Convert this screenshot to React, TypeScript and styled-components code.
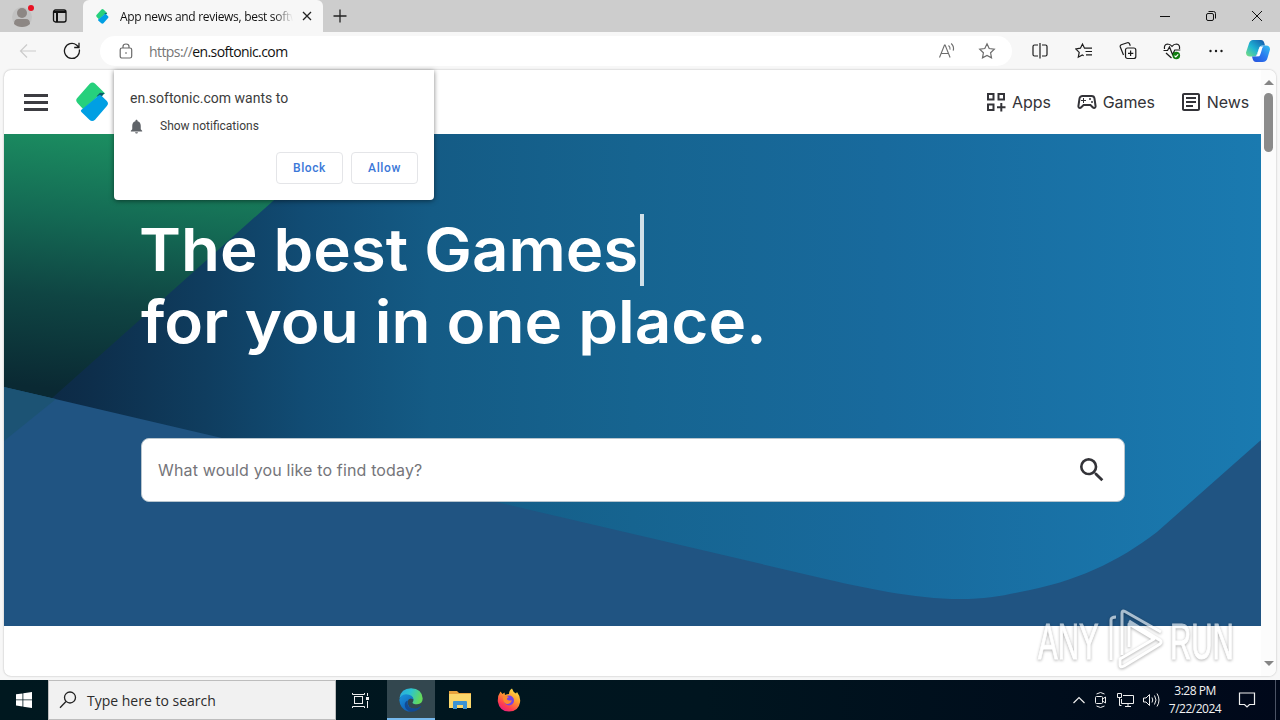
import styled, { createGlobalStyle } from 'styled-components';
import {
    MdNotifications,
    MdOutlineArticle,
    MdOutlineSportsEsports,
    MdSearch
} from 'react-icons/md';

const navItems = [
    { label: 'Apps', icon: <AppsIcon /> },
    { label: 'Games', icon: <MdOutlineSportsEsports size={24} /> },
    { label: 'News', icon: <MdOutlineArticle size={24} /> }
];

const App = () => {
    return (
        <Desktop>
            <GlobalStyle />
            <TitleBar />
            <AddressBar />
            <Viewport>
                <Page>
                    <SiteHeader />
                    <Hero />
                </Page>
                <Scrollbar>
                    <Arrow $up />
                    <Thumb />
                    <Arrow />
                </Scrollbar>
                <Permission />
            </Viewport>
            <Taskbar />
            <Watermark />
        </Desktop>
    );
};

export default App;

function AppsIcon() {
    return (
        <svg width="24" height="24" viewBox="0 0 24 24" fill="none" stroke="currentColor" strokeWidth="2">
            <path d="M4 4h5.500v5.500H4zM14.500 4H20v5.500h-5.500zM4 14.500h5.500V20H4zM17.300 13v8.500M13 17.300h8.500" />
        </svg>
    );
}

const SoftonicMark = ({ width, height }: { width: number; height: number }) => (
    <svg width={width} height={height} viewBox="0 0 34 40">
        <path
            d="M14.2 1.2q2.8-2.4 5.6 0l9.4 9.2q1 1.2-.2 1.4l-5 1.2L7.500 27.500 1.500 21q-2.600-2.800 0-5.400z"
            fill="#26d07c"
        />
        <path d="M29.400 10.800l-3.600 4.600-4.600-1.400 3.500-3.500z" fill="#0a5b68" />
        <path
            d="M22.500 14q2-2.200 4-.2l5.300 5.200q2.300 2.600 0 5.200L19.600 38.300q-3 2.600-5.800 0l-8.200-7.900q-1.200-1.300 0-2.500z"
            fill="#009fe3"
        />
    </svg>
);

const TitleBar = () => (
    <TitleRow>
        <TabTools>
            <svg width="26" height="28" viewBox="0 0 26 28">
                <circle cx="11" cy="17" r="10" fill="#c2c2c2" />
                <circle cx="11" cy="13" r="5" fill="#8d8784" />
                <path d="M3 24q0-5 4-5h8q4 0 4 5-3 3-8 3t-8-3z" fill="#8d8784" />
                <circle cx="20" cy="8" r="3" fill="#e81123" />
            </svg>
            <svg width="16" height="16" viewBox="0 0 16 16" fill="none" stroke="#111" strokeWidth="1.300">
                <rect x="1.500" y="2" width="12.500" height="12" rx="2" />
                <path d="M1.500 4h12.500M5 4v10" strokeWidth="2" />
            </svg>
        </TabTools>
        <Tab>
            <SoftonicMark width={13} height={15} />
            <TabTitle>App news and reviews, best softw</TabTitle>
            <svg width="10" height="10" viewBox="0 0 10 10" stroke="#222" strokeWidth="1.300">
                <path d="M1 1l8 8M9 1l-8 8" />
            </svg>
        </Tab>
        <NewTab>
            <svg width="16" height="16" viewBox="0 0 16 16" stroke="#222" strokeWidth="1.300">
                <path d="M8 1.500v13M1.500 8h13" />
            </svg>
        </NewTab>
        <WindowButtons>
            <svg width="12" height="12" viewBox="0 0 12 12" stroke="#111">
                <path d="M1 6.500h10" />
            </svg>
            <svg width="12" height="12" viewBox="0 0 12 12" stroke="#111" fill="none">
                <rect x="1.500" y="3.500" width="7" height="7" rx="1.500" />
                <path d="M3.500 1.500h5q2 0 2 2v5" />
            </svg>
            <svg width="12" height="12" viewBox="0 0 12 12" stroke="#111">
                <path d="M1 1l10 10M11 1L1 11" />
            </svg>
        </WindowButtons>
    </TitleRow>
);

const star = 'M9 1.800l2.200 4.700 5.100.7-3.700 3.600.9 5.100L9 13.500l-4.500 2.400.9-5.100L1.700 7.200l5.100-.7z';

const AddressBar = () => (
    <ToolRow>
        <NavButtons>
            <svg width="18" height="16" viewBox="0 0 18 16" stroke="#cbcbcb" fill="none" strokeWidth="1.200">
                <path d="M8 1.500L1.500 8 8 14.500M1.500 8H17" />
            </svg>
            <svg width="18" height="18" viewBox="0 0 18 18" stroke="#1b1b1b" fill="none" strokeWidth="1.300">
                <path d="M16.300 7.500A7.500 7.500 0 1 1 13.500 3l2.200 2M16 .8V5.500h-4.800" />
            </svg>
        </NavButtons>
        <UrlField>
            <svg width="14" height="16" viewBox="0 0 14 16" stroke="#6a6a6a" fill="none" strokeWidth="1.200">
                <rect x="1.200" y="5" width="11.500" height="10" rx="1.800" />
                <path d="M4 5V3.500q0-2.500 3-2.500t3 2.500V5" />
                <circle cx="7" cy="10" r=".8" fill="#555" stroke="none" />
            </svg>
            <Url>
                <span>https://</span>en.softonic.com
            </Url>
            <svg width="18" height="18" viewBox="0 0 18 18" stroke="#6d6d6d" fill="none" strokeWidth="1.100">
                <path d="M1.500 15.500L6.500 3h.6l5 12.500M3.200 11.500h7.200M10.500 3.500q2 1.600 1.500 4.200M13.200 1.500q3.200 3 2 7.200" />
            </svg>
            <svg width="18" height="18" viewBox="0 0 18 18" stroke="#6d6d6d" fill="none" strokeWidth="1.200">
                <path d={star} />
            </svg>
        </UrlField>
        <Extras>
            <svg width="18" height="18" viewBox="0 0 18 18" stroke="#1b1b1b" fill="none" strokeWidth="1.200">
                <path d="M7 3H3.500Q2 3 2 4.500v8Q2 14 3.500 14H7M11 3h3.500Q16 3 16 4.500v8q0 1.500-1.500 1.500H11M9 1v15.500" />
            </svg>
            <svg width="18" height="18" viewBox="0 0 18 18" stroke="#1b1b1b" fill="none" strokeWidth="1.200">
                <path d="M11 6.200H9.500L7.500 2 5.400 6.200.8 7l3.400 3.400-.9 4.800 4-2.200 1.400.7M10.500 6.200h6.500M10.500 9.500H17M11 12.800h6" />
            </svg>
            <svg width="18" height="18" viewBox="0 0 18 18" stroke="#1b1b1b" fill="none" strokeWidth="1.200">
                <rect x="6.500" y="6" width="10.300" height="10.500" rx="2" />
                <path d="M11.600 8.500v5.500M9 11.300h5.300M4.500 13L1.300 5q-.5-1.600 1-2.300l6-1.900q1.600-.5 2.200 1l.8 2" />
            </svg>
            <svg width="18" height="18" viewBox="0 0 18 18" stroke="#1b1b1b" fill="none" strokeWidth="1.200">
                <path d="M1.500 7Q.8 2.500 4.500 2q2.800 0 4.500 2.300Q10.700 2 13.500 2q3.700.5 3 5M.5 8.500h4l2-3.500 3 7.500 2.300-4.500h5.500M3 11l5.500 5" />
                <circle cx="13.300" cy="13.500" r="3.800" fill="#107c10" stroke="none" />
                <path d="M11.500 13.600l1.300 1.300 2.400-2.500" stroke="#fff" />
            </svg>
            <svg width="18" height="18" viewBox="0 0 18 18" fill="#1b1b1b">
                <circle cx="3.500" cy="9" r="1.200" />
                <circle cx="9" cy="9" r="1.200" />
                <circle cx="14.500" cy="9" r="1.200" />
            </svg>
            <Copilot />
        </Extras>
    </ToolRow>
);

const Copilot = () => (
    <svg width="24" height="24" viewBox="0 0 24 24">
        <defs>
            <linearGradient id="cpA" x1="0" y1="1" x2="1" y2="0">
                <stop offset="0" stopColor="#7ae07c" />
                <stop offset=".45" stopColor="#1fb3d4" />
                <stop offset="1" stopColor="#1453a8" />
            </linearGradient>
            <linearGradient id="cpB" x1="0" y1="1" x2="1" y2="0">
                <stop offset="0" stopColor="#2850dc" />
                <stop offset=".5" stopColor="#2a78ef" />
                <stop offset="1" stopColor="#34c2f0" />
            </linearGradient>
        </defs>
        <path d="M7 1h8q2.500 0 3.300 3l.7 2.500h-3q-2 0-3 3L11 15q-.8 2.500-3.500 2.500H4q-4 0-4-4L3 4.500Q4 1 7 1z" fill="url(#cpA)" />
        <path d="M17 6.500h3q4 0 4 4L21.500 19q-1 4-5 4H10q-2.500 0-3.300-3L6 17.500h2q2.500 0 3.300-2.500l2-6q.7-2.500 3.700-2.500z" fill="url(#cpB)" />
        <path d="M14 7.500q-1 1-2.800 7.800-.5 1.500-2 2.200 1.800-.2 4-.2 1.200-1 3-8 .4-1.400 1.400-1.800z" fill="#fff" />
    </svg>
);

const SiteHeader = () => (
    <Header>
        <Burger>
            <i />
            <i />
            <i />
        </Burger>
        <SoftonicMark width={33} height={40} />
        <Nav>
            {navItems.map(({ label, icon }) => (
                <NavItem key={label}>
                    {icon}
                    {label}
                </NavItem>
            ))}
        </Nav>
    </Header>
);

const Hero = () => (
    <HeroSection>
        <HeroArt />
        <Headline>
            <HeadLine $stretch={1.078} $inset={-2}>
                The best Games
            </HeadLine>
            <Caret />
        </Headline>
        <Headline>
            <HeadLine $stretch={1.081}>for you in one place.</HeadLine>
        </Headline>
        <SearchBox>
            <span>What would you like to find today?</span>
            <MdSearch size={32} />
        </SearchBox>
    </HeroSection>
);

const HeroArt = () => (
    <Backdrop width="1257" height="492" viewBox="4 134 1257 492">
        <defs>
            <linearGradient id="sea" gradientUnits="userSpaceOnUse" x1="4" y1="0" x2="1261" y2="0">
                <stop offset="0" stopColor="#0c253f" />
                <stop offset=".07" stopColor="#0d2e4b" />
                <stop offset=".16" stopColor="#0f3d5f" />
                <stop offset=".24" stopColor="#114c74" />
                <stop offset=".34" stopColor="#145b85" />
                <stop offset=".5" stopColor="#166490" />
                <stop offset=".7" stopColor="#186a9d" />
                <stop offset="1" stopColor="#1a7ab0" />
            </linearGradient>
            <linearGradient id="leaf" gradientUnits="userSpaceOnUse" x1="180" y1="134" x2="150" y2="400">
                <stop offset="0" stopColor="#1c9162" />
                <stop offset=".35" stopColor="#146a54" />
                <stop offset=".65" stopColor="#0f4543" />
                <stop offset="1" stopColor="#0a2933" />
            </linearGradient>
        </defs>
        <path d="M4 134H1261V626H4z" fill="url(#sea)" />
        <path d="M4 134H348L4 441z" fill="url(#leaf)" />
        <path
            d="M4 387L820 577.700C860 587 915 599 960 599C985 599 1000 596 1020 592C1075 582 1118 562 1157 532L1261 440V626H4z"
            fill="#205482"
        />
        <path d="M4 387L56 399.100 4 441z" fill="#1c5374" />
    </Backdrop>
);

const Permission = () => (
    <Popup>
        <PopupTitle>en.softonic.com wants to</PopupTitle>
        <PopupRow>
            <MdNotifications size={17} color="#5f6368" />
            <span>Show notifications</span>
        </PopupRow>
        <PopupActions>
            <PopupButton>Block</PopupButton>
            <PopupButton>Allow</PopupButton>
        </PopupActions>
    </Popup>
);

const Taskbar = () => (
    <Bar>
        <BarCell>
            <svg width="16" height="16" viewBox="0 0 16 16" fill="#fff">
                <path d="M0 2.300l6.500-.9v6.100H0zM7.300 1.300L16 0v7.500H7.300zM0 8.300h6.500v6.200L0 13.600zM7.300 8.300H16V16l-8.700-1.300z" />
            </svg>
        </BarCell>
        <BarSearch>
            <svg width="18" height="18" viewBox="0 0 18 18" stroke="#222" fill="none" strokeWidth="1.300">
                <circle cx="11" cy="6.500" r="5.500" />
                <path d="M7 10.500L1 16.700" />
            </svg>
            Type here to search
        </BarSearch>
        <BarCell>
            <svg width="17" height="17" viewBox="0 0 17 17" stroke="#eee" fill="none">
                <rect x="2.500" y="4.500" width="8" height="7" />
                <path d="M.5 1v1.500h12V1M.5 16v-1.500h12V16M15.500 1v3M15.500 9v7" />
                <path d="M14 5h3v3h-3z" fill="#eee" stroke="none" />
            </svg>
        </BarCell>
        <BarCell $active>
            <EdgeLogo />
        </BarCell>
        <BarCell>
            <svg width="22" height="20" viewBox="0 0 22 20">
                <path d="M0 1h8l2 2h12v15H0z" fill="#e8a33d" />
                <path d="M0 4h22v14H0z" fill="#fbd76b" />
                <path d="M4 19v-7q0-1 1-1h12q1 0 1 1v7h-4v-4H8v4z" fill="#3b93d4" />
            </svg>
        </BarCell>
        <BarCell>
            <FirefoxLogo />
        </BarCell>
        <Tray>
            <svg width="12" height="8" viewBox="0 0 12 8" stroke="#eee" fill="none" strokeWidth="1.200">
                <path d="M.5 7L6 1.500 11.500 7" />
            </svg>
            <svg width="14" height="18" viewBox="0 0 14 18" stroke="#eee" fill="none">
                <rect x="1.500" y="5.500" width="7" height="7" rx="1" />
                <path d="M8.500 8l3-2v6l-3-2M2.500 3q4-3 8 0M2.500 15q4 3 8 0" />
            </svg>
            <svg width="17" height="16" viewBox="0 0 17 16" stroke="#eee" fill="none">
                <path d="M6 3.500h10.500v8H4.500V7M8 14.500h6M11 11.500v3M.5 1.500h4v4h-4zM2.500 5.500v8h2" />
            </svg>
            <svg width="17" height="14" viewBox="0 0 17 14" stroke="#eee" fill="none">
                <path d="M.5 5v4H3l3.500 3.500v-11L3 5zM9 4.500q1.500 2.500 0 5M11.500 2.500q3 4.500 0 9M14 .5q4 6.500 0 13" />
            </svg>
            <Clock>
                <span>3:28 PM</span>
                <span>7/22/2024</span>
            </Clock>
            <svg width="18" height="18" viewBox="0 0 18 18" stroke="#eee" fill="none" strokeWidth="1.200">
                <path d="M1.500 2h15v11.500h-5L9 16l-2.500-2.500h-5z" />
            </svg>
            <PeekLine />
        </Tray>
    </Bar>
);

const EdgeLogo = () => (
    <svg width="24" height="24" viewBox="0 0 24 24">
        <defs>
            <linearGradient id="edA" x1="0" y1="0" x2="1" y2=".3">
                <stop offset="0" stopColor="#2aa7e0" />
                <stop offset=".5" stopColor="#2cc3d0" />
                <stop offset="1" stopColor="#63d95c" />
            </linearGradient>
            <linearGradient id="edB" x1="0" y1="0" x2=".6" y2="1">
                <stop offset="0" stopColor="#1a95dc" />
                <stop offset="1" stopColor="#0f5cb5" />
            </linearGradient>
        </defs>
        <path d="M.5 10Q2 .5 12 .3q11 .5 11.700 10.200Q23.500 16 18 16.300q-4.500 0-4.500-1.800 1-1 1-2.700Q14 8 9 7.700 3 7.500.5 10z" fill="url(#edA)" />
        <path d="M.3 12Q.8 6.800 7 6.300q7 .2 7.500 5.200Q10 9 8.600 13.500 8 20 16 21q-3 3-7 2.500Q1 21 .3 12z" fill="url(#edB)" />
        <path d="M8.600 12.500q-1.300 8 7 8 3 0 6-2.500.6 0 .4.800-3.500 5-10 5-6.300-1.500-6.300-7 0-3 2.900-4.300z" fill="#124a93" />
    </svg>
);

const FirefoxLogo = () => (
    <svg width="24" height="24" viewBox="0 0 24 24">
        <defs>
            <linearGradient id="ffA" x1=".8" y1="0" x2=".2" y2="1">
                <stop offset="0" stopColor="#ffe74a" />
                <stop offset=".4" stopColor="#ff9a2e" />
                <stop offset=".75" stopColor="#ff3d4f" />
                <stop offset="1" stopColor="#e3198a" />
            </linearGradient>
        </defs>
        <path d="M3.500 3.500L5.500 6l2-1.500L8 7q2-1 4-1 0-4 3-5.500 1 3.500 4 5l1-1.500q4 5 3 10.500Q21.500 23.500 12 23.500T.8 13.500Q.5 7.500 3.500 3.500z" fill="url(#ffA)" />
        <circle cx="12" cy="12.500" r="5" fill="#7542e5" />
        <path d="M6 9q3-2 6 .3-2.200.2-2.200 1.900 1.500 2 5 1-1 4-5 3.800Q6 15 6 9z" fill="#ff8a2b" />
    </svg>
);

const Watermark = () => (
    <Brand>
        <BrandText>ANY</BrandText>
        <svg width="60" height="64" viewBox="0 0 60 64" fill="none" stroke="#fff" strokeWidth="3" strokeLinejoin="round">
            <path d="M16 47V5q0-3 3-1.500L55 24M23 39V16l25 15L14 51v6q0 3 4 1L54 36q3-3-2-5L23 13" />
            <path d="M5 52V12q0-3 5-3" />
        </svg>
        <BrandText>RUN</BrandText>
    </Brand>
);

const GlobalStyle = createGlobalStyle`
    * {
        box-sizing: border-box;
    }

    body {
        margin: 0;
        overflow: hidden;
        font-family: 'Open Sans', sans-serif;
    }

    svg {
        display: block;
        flex-shrink: 0;
    }
`;

const Desktop = styled.div`
    position: relative;
    display: flex;
    flex-direction: column;
    width: 1280px;
    height: 720px;
    overflow: hidden;
    background: #f7f7f7;
`;

const TitleRow = styled.div`
    display: flex;
    height: 32px;
    background: #cdcdcd;
`;

const TabTools = styled.div`
    display: flex;
    gap: 15px;
    width: 83px;
    padding-left: 11px;

    svg:last-child {
        margin-top: 8px;
    }
`;

const Tab = styled.div`
    display: flex;
    align-items: center;
    width: 240px;
    padding-left: 13px;
    border-radius: 6px 6px 0 0;
    background: #f7f7f7;
`;

const TabTitle = styled.span`
    width: 174px;
    margin: 0 8px 0 11px;
    font-size: 12px;
    letter-spacing: -0.3px;
    white-space: nowrap;
    color: #111;
    mask-image: linear-gradient(90deg, #000 154px, transparent 173px);
`;

const NewTab = styled.div`
    flex: 1;
    padding: 8px 0 0 9px;
`;

const WindowButtons = styled.div`
    display: flex;
    align-items: center;
    gap: 34px;
    padding-right: 17px;
`;

const ToolRow = styled.div`
    display: flex;
    align-items: center;
    height: 38px;
    background: #f7f7f7;
`;

const NavButtons = styled.div`
    display: flex;
    align-items: center;
    gap: 26px;
    width: 100px;
    padding-left: 19px;
`;

const UrlField = styled.div`
    display: flex;
    align-items: center;
    gap: 22px;
    width: 912px;
    height: 30px;
    padding: 0 16px 0 19px;
    border-radius: 15px;
    background: #fff;
`;

const Url = styled.span`
    flex: 1;
    margin-left: -6px;
    font-size: 14px;
    letter-spacing: -0.57px;
    color: #111;

    span {
        color: #767676;
    }
`;

const Extras = styled.div`
    display: flex;
    align-items: center;
    gap: 26px;
    padding-left: 19px;

    svg:last-child {
        margin-left: -5px;
    }
`;

const Viewport = styled.div`
    position: relative;
    display: flex;
    height: 606px;
    margin: 0 4px;
    border-radius: 7px;
    background: #fff;
    box-shadow: 0 0 2px rgba(0, 0, 0, 0.3);
`;

const Page = styled.div`
    width: 1257px;
`;

const Scrollbar = styled.div`
    display: flex;
    flex-direction: column;
    align-items: center;
    width: 15px;
    padding: 10px 0 10px;
    border-radius: 0 7px 7px 0;
    background: #fcfcfc;
`;

const Arrow = styled.i<{ $up?: boolean }>`
    border: 5px solid transparent;
    ${({ $up }) =>
        $up
            ? 'border-top: 0; border-bottom-color: #858585;'
            : 'border-bottom: 0; border-top-color: #858585; margin-top: auto;'}
`;

const Thumb = styled.div`
    width: 9px;
    height: 59px;
    margin-top: 8px;
    border-radius: 5px;
    background: #8b8b8b;
`;

const Header = styled.header`
    display: flex;
    align-items: center;
    height: 64px;
    padding: 0 12px 1px 20px;
`;

const Burger = styled.div`
    display: grid;
    gap: 4px;
    width: 24px;
    margin: 1px 28px 0 0;

    i {
        height: 3px;
        background: #3c3c41;
    }
`;

const Nav = styled.nav`
    display: flex;
    gap: 24px;
    margin-left: auto;
`;

const NavItem = styled.div`
    display: flex;
    align-items: center;
    gap: 4px;
    font-family: Inter, sans-serif;
    font-size: 16px;
    letter-spacing: -0.12px;
    color: #333338;
`;

const HeroSection = styled.section`
    position: relative;
    height: 492px;
    padding: 80px 136px 0 137px;
`;

const Backdrop = styled.svg`
    position: absolute;
    inset: 0;
`;

const Headline = styled.div`
    position: relative;
    display: flex;
    height: 72px;
    line-height: 72px;
`;

const HeadLine = styled.span<{ $stretch: number; $inset?: number }>`
    margin-left: ${({ $inset = 0 }) => $inset}px;
    font-family: Inter, sans-serif;
    font-size: 59px;
    font-weight: 600;
    white-space: nowrap;
    color: #fff;
    transform: scaleX(${({ $stretch }) => $stretch});
    transform-origin: left;
`;

const Caret = styled.i`
    position: absolute;
    left: 499px;
    width: 4px;
    height: 72px;
    background: #d0e0e9;
`;

const SearchBox = styled.div`
    position: relative;
    display: flex;
    align-items: center;
    justify-content: space-between;
    height: 64px;
    margin-top: 80px;
    padding: 0 16px 1px;
    border: 1px solid #b8c5ce;
    border-radius: 8px;
    background: #fff;
    font-family: Inter, sans-serif;
    font-size: 16px;
    letter-spacing: 0.15px;
    color: #75757a;

    svg {
        color: #333338;
    }
`;

const Popup = styled.div`
    position: absolute;
    top: 0;
    left: 110px;
    display: flex;
    flex-direction: column;
    width: 320px;
    height: 130px;
    padding: 18px 16px 16px;
    border-radius: 0 0 4px 4px;
    background: #fff;
    box-shadow: 0 1px 5px rgba(0, 0, 0, 0.5);
    font-family: Roboto, sans-serif;
    color: #3c3c3c;
`;

const PopupTitle = styled.div`
    font-size: 14px;
    line-height: 20px;
    letter-spacing: 0;
`;

const PopupRow = styled.div`
    display: flex;
    align-items: center;
    gap: 15px;
    height: 36px;
    margin-left: -2px;
    font-size: 12px;
    letter-spacing: 0;
`;

const PopupActions = styled.div`
    display: flex;
    justify-content: flex-end;
    gap: 8px;
    margin-top: auto;
`;

const PopupButton = styled.button`
    width: 67px;
    height: 32px;
    padding: 0;
    border: 1px solid #e4e5e8;
    border-radius: 4px;
    background: #fff;
    font-family: Roboto, sans-serif;
    font-size: 12px;
    font-weight: 500;
    letter-spacing: 0.6px;
    color: #3b78d8;
`;

const Bar = styled.div`
    display: flex;
    height: 40px;
    margin-top: 4px;
    background: linear-gradient(90deg, #00181f 0%, #00151f 55%, #00081a 100%);
`;

const BarCell = styled.div<{ $active?: boolean }>`
    display: flex;
    align-items: center;
    justify-content: center;
    width: 48px;
    margin-right: 1px;
    ${({ $active }) => $active && 'background: #33474f; box-shadow: inset 0 -2px #76b9ed;'}

    &:first-child {
        margin-right: 0;
    }

    &:nth-child(3) {
        padding-right: 4px;
    }
`;

const BarSearch = styled.div`
    display: flex;
    align-items: center;
    gap: 10px;
    width: 288px;
    margin-right: 2px;
    padding-left: 10px;
    border: 1px solid #bdbdbd;
    background: #f1f1f1;
    font-size: 14px;
    color: #2c2c2c;
`;

const Tray = styled.div`
    display: flex;
    align-items: center;
    gap: 9px;
    margin-left: auto;
    color: #f2f2f2;
`;

const Clock = styled.div`
    display: flex;
    flex-direction: column;
    align-items: center;
    width: 54px;
    margin: 0 7px 0 -1px;
    font-size: 12px;
    line-height: 18px;
    letter-spacing: -0.5px;
    white-space: nowrap;
`;

const PeekLine = styled.i`
    align-self: stretch;
    width: 1px;
    margin: 0 4px 0 10px;
    background: #4b5365;
`;

const Brand = styled.div`
    position: absolute;
    top: 608px;
    left: 1038px;
    display: flex;
    align-items: center;
    width: 196px;
    height: 64px;
    opacity: 0.62;
    filter: drop-shadow(0 1px 1.5px rgba(0, 0, 0, 0.5));

    svg {
        margin: 0 4px 0 5px;
    }
`;

const BrandText = styled.span`
    width: 63px;
    padding-top: 3px;
    font-family: 'Liberation Sans', sans-serif;
    font-size: 50px;
    line-height: 64px;
    color: #fff;
    white-space: nowrap;
    transform: scaleX(0.59);
    transform-origin: left;
    -webkit-text-stroke: 1px #fff;
`;
